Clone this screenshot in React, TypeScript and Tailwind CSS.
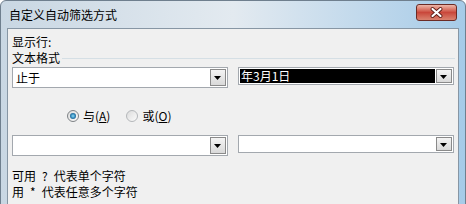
import React from 'react'

const font = "font-['Noto_Sans_CJK_SC','Noto_Sans',sans-serif]"

function DropButton() {
  return (
    <div className="w-[16px] self-stretch my-[1px] mr-[1px] border border-[#8a8a8a] bg-linear-to-b from-[#f4f4f4] to-[#d9d9d9] flex items-center justify-center">
      <svg width="8" height="5" viewBox="0 0 8 5" className="mt-[2px]">
        <path d="M0 0 H7 L3.5 4 Z" fill="#000" />
      </svg>
    </div>
  )
}

function Combo({ text, tall, selected }: { text?: string; tall?: boolean; selected?: boolean }) {
  return (
    <div
      className={
        'w-[216px] flex bg-white border border-[#a3a8ae] ' + (tall ? 'h-[21px]' : 'h-[18px]')
      }
    >
      {selected ? (
        <div className="flex-1 m-[1px] bg-black text-white text-[12px] leading-[14px] flex items-center pl-[1px]">
          {text}
        </div>
      ) : (
        <div className="flex-1 text-[12px] leading-[14px] flex items-center pl-[3px] text-black">{text}</div>
      )}
      <DropButton />
    </div>
  )
}

function Radio({ checked }: { checked?: boolean }) {
  return (
    <div
      className={
        'w-[12px] h-[12px] rounded-full border flex items-center justify-center bg-linear-to-br from-[#dcdcdc] to-[#fbfbfb] ' +
        (checked ? 'border-[#7e8286]' : 'border-[#b4b7ba]')
      }
    >
      {checked && <div className="w-[6px] h-[6px] rounded-full bg-radial from-[#8fdcf5] via-[#2f86b8] to-[#163f66]" />}
    </div>
  )
}

export default function App() {
  return (
    <div className={'w-[466px] h-[204px] overflow-hidden bg-white ' + font}>
      <div className="h-[214px] flex flex-col rounded-t-[6px] border border-[#6f7f8e] bg-linear-to-r from-[#c9d7e3] via-[#e3eaf0] to-[#a6cbe8]">
        {/* Title bar */}
        <div className="h-[27px] flex items-start justify-between pl-[8px] pr-[8px]">
          <span className="text-[12px] leading-[14px] mt-[7px] text-black">自定义自动筛选方式</span>
          <div className="mt-[3px] w-[41px] h-[17px] rounded-[3px] border border-[#6b2b25] bg-linear-to-b from-[#ecb6a9] via-[#c9473b] to-[#d9826f] flex items-center justify-center">
            <svg width="13" height="11" viewBox="0 0 13 11">
              <path d="M2.5 2 L10.5 9 M10.5 2 L2.5 9" stroke="#5a1a14" strokeWidth="3.8" strokeLinecap="round" />
              <path d="M2.5 2 L10.5 9 M10.5 2 L2.5 9" stroke="#ffffff" strokeWidth="2.2" strokeLinecap="round" />
            </svg>
          </div>
        </div>

        {/* Client area */}
        <div className="flex-1 mx-[6px] border border-[#8796a4] bg-[#f0f0f0] pl-[4px] pr-[3px] pt-[5px] text-[12px] leading-[16px] text-black">
          <div>显示行:</div>
          <div className="flex items-center">
            <span>文本格式</span>
            <div className="flex-1 ml-[2px] border-t border-[#d5dfe5]" />
          </div>

          <div className="mt-[1px] flex items-start gap-[10px]">
            <Combo text="止于" tall />
            <Combo text="年3月1日" selected />
          </div>

          <div className="mt-[20px] h-[16px] flex items-center pl-[55px]">
            <Radio checked />
            <span className="ml-[4px]">
              与(<span className="underline">A</span>)
            </span>
            <div className="ml-[16px]">
              <Radio />
            </div>
            <span className="ml-[4px]">
              或(<span className="underline">O</span>)
            </span>
          </div>

          <div className="mt-[11px] flex items-start gap-[10px]">
            <Combo tall />
            <Combo />
          </div>

          <div className="mt-[12px]">
            可用<span className="mx-[6px]">?</span>代表单个字符
          </div>
          <div>
            用<span className="mx-[6px]">*</span>代表任意多个字符
          </div>
        </div>
      </div>
    </div>
  )
}
